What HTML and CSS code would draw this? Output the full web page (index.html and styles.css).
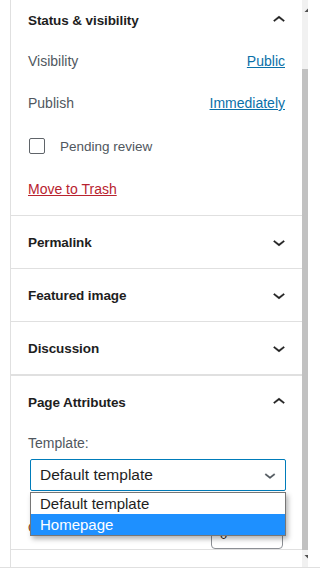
FILE: index.html
```html
<!DOCTYPE html>
<html lang="en">
<head>
<meta charset="utf-8">
<title>Page settings</title>
<link rel="stylesheet" href="styles.css">
</head>
<body>
<div class="frame">
  <div class="gutter"></div>
  <div class="panel">
    <section class="section status">
      <div class="head first"><h2>Status &amp; visibility</h2>
        <svg class="chev" viewBox="0 0 24 24" width="24" height="24"><path d="M6.5 12.4L12 8l5.5 4.4-.9 1.2L12 10l-4.6 3.6-.9-1.2z"/></svg>
      </div>
      <div class="row"><span class="label">Visibility</span><a class="link" href="#">Public</a></div>
      <div class="row"><span class="label">Publish</span><a class="link" href="#">Immediately</a></div>
      <div class="row check"><span class="box"></span><span class="label small">Pending review</span></div>
      <div class="row trash"><a class="trash-link" href="#">Move to Trash</a></div>
    </section>
    <section class="section">
      <div class="head"><h2>Permalink</h2>
        <svg class="chev" viewBox="0 0 24 24" width="24" height="24"><path d="M17.5 11.6L12 16l-5.5-4.4.9-1.2L12 14l4.6-3.6.9 1.2z"/></svg>
      </div>
    </section>
    <section class="section">
      <div class="head"><h2>Featured image</h2>
        <svg class="chev" viewBox="0 0 24 24" width="24" height="24"><path d="M17.5 11.6L12 16l-5.5-4.4.9-1.2L12 14l4.6-3.6.9 1.2z"/></svg>
      </div>
    </section>
    <section class="section thick">
      <div class="head"><h2>Discussion</h2>
        <svg class="chev" viewBox="0 0 24 24" width="24" height="24"><path d="M17.5 11.6L12 16l-5.5-4.4.9-1.2L12 14l4.6-3.6.9 1.2z"/></svg>
      </div>
    </section>
    <section class="section attrs">
      <div class="head"><h2>Page Attributes</h2>
        <svg class="chev" viewBox="0 0 24 24" width="24" height="24"><path d="M6.5 12.4L12 8l5.5 4.4-.9 1.2L12 10l-4.6 3.6-.9-1.2z"/></svg>
      </div>
      <div class="field-label">Template:</div>
      <div class="select-wrap">
        <div class="select">
          <span>Default template</span>
          <svg class="sel-chev" viewBox="0 0 24 24" width="22" height="22"><path d="M17.5 11.6L12 16l-5.5-4.4.9-1.2L12 14l4.6-3.6.9 1.2z"/></svg>
        </div>
        <ul class="dropdown">
          <li>Default template</li>
          <li class="hl">Homepage</li>
        </ul>
      </div>
      <div class="order-row">
        <span class="order-label">Order</span>
        <span class="order-input">0</span>
      </div>
    </section>
  </div>
  <div class="scrollbar">
    <div class="sb-inner">
      <svg class="sb-arrow" viewBox="0 0 17 17" width="17" height="17"><path d="M4.5 12L8.5 8 12.5 12z"/></svg>
      <div class="sb-gap"></div>
      <div class="thumb"></div>
      <svg class="sb-arrow" viewBox="0 0 17 17" width="17" height="17"><path d="M4.5 5L8.5 9 12.5 5z"/></svg>
    </div>
  </div>
</div>
</body>
</html>
```
FILE: styles.css
```css
* { box-sizing: border-box; }
html, body { margin: 0; padding: 0; background: #fff; }
body {
  font-family: "Liberation Sans", Arial, sans-serif;
  font-size: 13px;
  color: #1e1e1e;
}
.frame {
  display: flex;
  height: 568px;
  border-bottom: 1px solid #e0e0e0;
  overflow: hidden;
}
.gutter { width: 10px; flex: none; }
.panel {
  width: 292px;
  flex: none;
  border-left: 1px solid #e0e0e0;
}
.section {
  border-bottom: 1px solid #e0e0e0;
  padding: 0 17px;
}
.section.thick { border-bottom-width: 2px; }
.section.status { padding-bottom: 5px; }
.head {
  height: 52px;
  display: flex;
  align-items: center;
  justify-content: space-between;
}
.head.first { height: 40px; }
.head h2 {
  margin: 0;
  font-size: 13.5px;
  font-weight: 700;
  letter-spacing: -0.1px;
  color: #1e1e1e;
}
.chev { margin-right: -6px; fill: #1e1e1e; stroke: #1e1e1e; stroke-width: 0.4; }
.row {
  height: 42px;
  display: flex;
  align-items: center;
  justify-content: space-between;
}
.row.check { height: 44px; justify-content: flex-start; gap: 15px; }
.label { color: #50575e; font-size: 14px; }
.label.small { font-size: 13.5px; }
.link { color: #0a70a8; text-decoration: underline; font-size: 14px; }
.box {
  width: 16px;
  height: 16px;
  margin-left: 1px;
  border: 1.5px solid #5f6469;
  border-radius: 2px;
}
.trash-link { color: #b8232f; text-decoration: underline; font-size: 14px; }
.field-label {
  color: #50575e;
  font-size: 14px;
  line-height: 16px;
  margin-top: 7px;
}
.select-wrap {
  position: relative;
  margin: 8px 0 0 2px;
  width: 256px;
}
.select {
  height: 32px;
  border: 1.5px solid #007cba;
  border-radius: 2px;
  display: flex;
  align-items: center;
  justify-content: space-between;
  padding: 0 4px 0 9px;
  font-size: 15.5px;
  color: #1e1e1e;
}
.sel-chev { fill: #50575e; stroke: #50575e; stroke-width: 0.3; }
.dropdown {
  position: absolute;
  left: 0;
  top: 33px;
  width: 256px;
  margin: 0;
  padding: 0;
  list-style: none;
  background: #fff;
  border: 1px solid #767676;
  box-shadow: 2px 3px 5px rgba(0, 0, 0, 0.3);
  z-index: 2;
}
.dropdown li {
  height: 21px;
  line-height: 21px;
  padding-left: 9px;
  font-size: 15px;
  color: #1e1e1e;
}
.dropdown li.hl { background: #1e90ff; color: #fff; }
.order-row {
  display: flex;
  align-items: flex-start;
  justify-content: space-between;
  margin-top: 28px;
  padding-right: 2px;
  height: 30px;
}
.order-label { color: #8a4a1e; font-size: 13px; line-height: 16px; padding-top: 1px; }
.order-input {
  width: 72px;
  height: 30px;
  border: 1px solid #8c8f94;
  border-radius: 4px;
  padding: 7px 8px;
  line-height: 16px;
  color: #1e1e1e;
}
.scrollbar {
  width: 6px;
  flex: none;
  background: #f1f1f1;
  overflow: hidden;
}
.sb-inner {
  width: 17px;
  height: 100%;
  display: flex;
  flex-direction: column;
}
.sb-arrow { flex: none; fill: #505050; margin-left: -2px; }
.sb-gap { height: 52px; flex: none; }
.thumb { height: 481px; flex: none; background: #c1c1c1; }
```
